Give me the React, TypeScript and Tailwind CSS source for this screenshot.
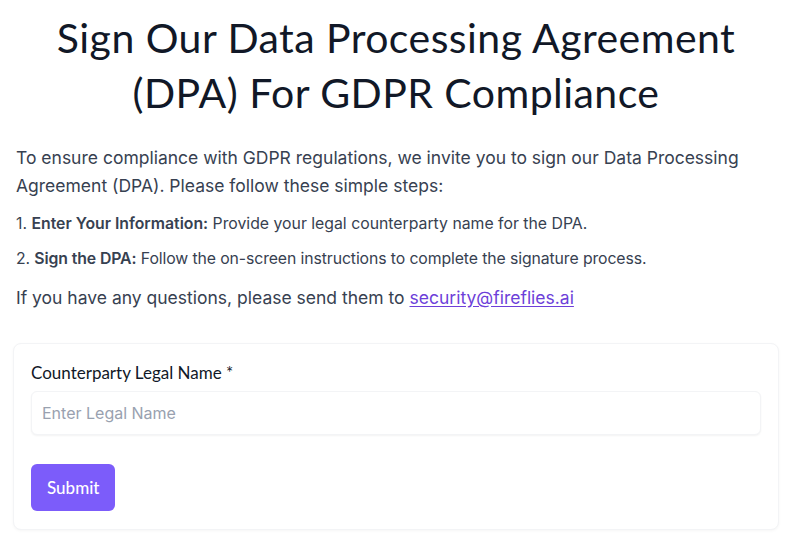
export default function App() {
  return (
    <div className="min-h-screen bg-white pl-[13px] pr-4 pt-[10px] text-[#1f2937]">
      <h1
        className="text-center text-[41px] leading-[55px] tracking-[0.45px] text-[#111827]"
        style={{ fontFamily: 'Lato, sans-serif' }}
      >
        Sign Our Data Processing Agreement
        <br />
        (DPA) For GDPR Compliance
      </h1>

      <div
        className="mt-[24px] pl-[3px] text-[#374151]"
        style={{ fontFamily: 'Inter, sans-serif' }}
      >
        <p className="text-[17.5px] leading-[28px]">
          To ensure compliance with GDPR regulations, we invite you to sign our Data Processing
          Agreement (DPA). Please follow these simple steps:
        </p>
        <ol className="mt-[12px] flex flex-col gap-[11px] text-[15.8px] leading-6">
          <li>
            1. <strong className="font-semibold">Enter Your Information:</strong> Provide your legal
            counterparty name for the DPA.
          </li>
          <li className="tracking-[-0.1px]">
            2. <strong className="font-semibold">Sign the DPA:</strong> Follow the on-screen
            instructions to complete the signature process.
          </li>
        </ol>
        <p className="mt-[13px] text-[17.5px] leading-[28px]">
          If you have any questions, please send them to{' '}
          <a href="#" className="text-[#6d3fd9] underline underline-offset-2">
            security@fireflies.ai
          </a>
        </p>
      </div>

      <div className="mt-[31px] rounded-lg border border-gray-100 bg-white px-[17px] pb-[18px] pt-[17px] shadow-[0_1px_3px_rgba(0,0,0,0.04)]">
        <label
          className="block text-[17px] leading-6 text-[#111827]"
          style={{ fontFamily: 'Lato, sans-serif' }}
        >
          Counterparty Legal Name *
        </label>
        <input
          placeholder="Enter Legal Name"
          className="mt-[6px] block h-[44px] w-full rounded-md border border-gray-100 bg-white px-[10px] text-[16px] text-gray-800 shadow-[0_1px_2px_rgba(0,0,0,0.05)] outline-none placeholder:text-gray-400"
          style={{ fontFamily: 'Inter, sans-serif' }}
        />
        <button
          className="mt-[29px] h-[47px] rounded-md bg-[#7c5cfa] px-4 text-[17px] font-medium text-white"
          style={{ fontFamily: 'Lato, sans-serif' }}
        >
          Submit
        </button>
      </div>
    </div>
  );
}
